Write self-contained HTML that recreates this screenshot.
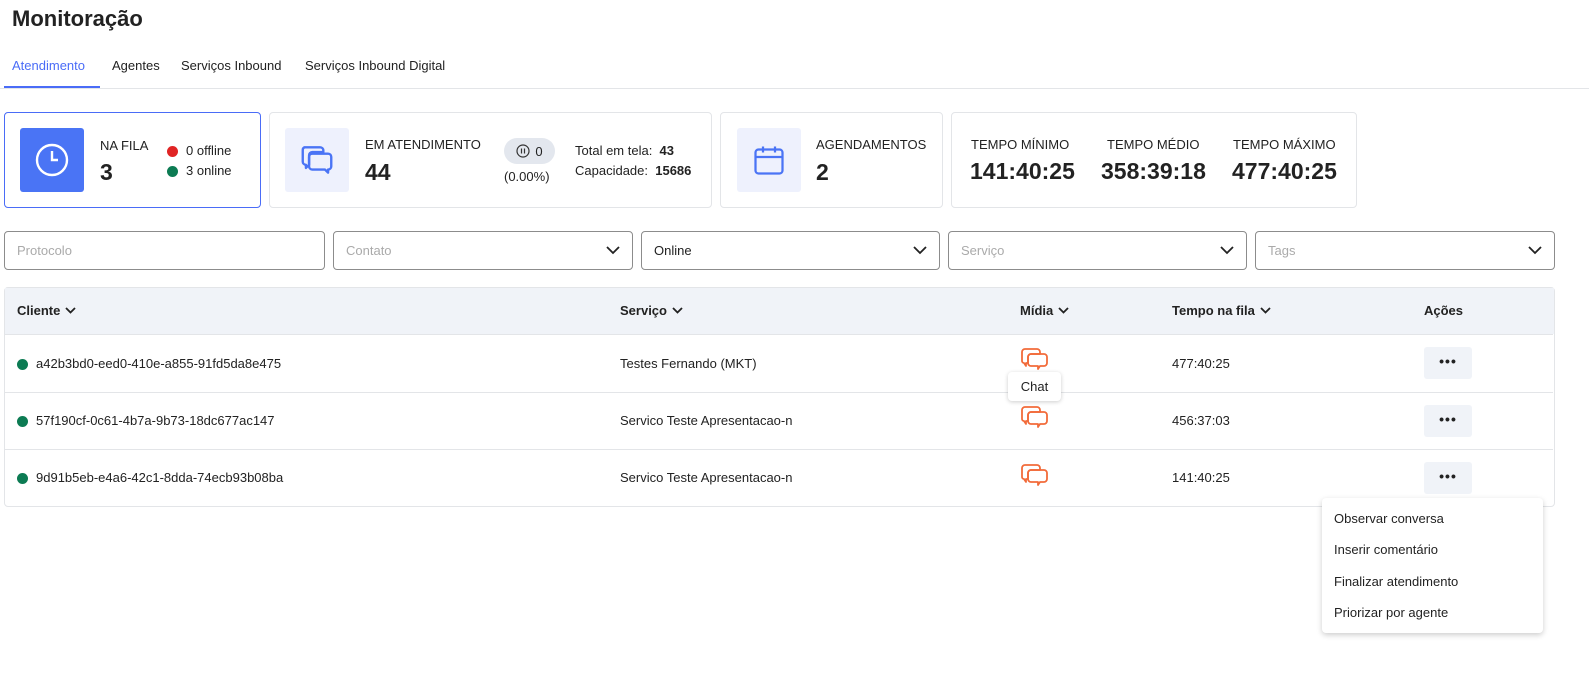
<!DOCTYPE html>
<html><head><meta charset="utf-8"><style>
*{box-sizing:border-box;margin:0;padding:0}
body{width:1589px;height:675px;background:#fff;font-family:"Liberation Sans",sans-serif;color:#222;position:relative;overflow:hidden;font-size:13px}
.a{position:absolute}
.card{position:absolute;top:112px;height:96px;border:1px solid #e3e5e8;border-radius:4px;background:#fff}
.ib{position:absolute;top:15px;width:64px;height:64px;border-radius:3px;background:#eef1fd;display:flex;align-items:center;justify-content:center}
.lbl{font-size:13px;color:#222}
.big{font-size:23px;font-weight:bold;color:#222}
.f{position:absolute;top:231px;height:39px;border:1px solid #8c8c8c;border-radius:4px;padding:0 12px;display:flex;align-items:center;justify-content:space-between;font-size:13px;color:#aaa}
.th{position:absolute;top:303px;font-weight:bold;font-size:13px;color:#222;display:flex;align-items:center;gap:5px}
.row{position:absolute;left:5px;width:1548px;border-top:1px solid #e3e5e8}
.dot{display:inline-block;width:11px;height:11px;border-radius:50%;background:#0c7b53;vertical-align:middle;margin-right:8px}
.btn{position:absolute;left:1424px;width:48px;height:32px;background:#f0f3f8;border-radius:3px;text-align:center;font-weight:bold;line-height:28px;font-size:14px;letter-spacing:1px}
.mi{position:absolute;left:12px;font-size:13px;color:#222}
</style></head><body>
<div class="a" style="left:12px;top:6px;font-size:22px;font-weight:bold">Monitoração</div>
<div class="a" style="left:12px;top:58px;font-size:13px;color:#4a6cf7">Atendimento</div>
<div class="a" style="left:112px;top:58px">Agentes</div>
<div class="a" style="left:181px;top:58px">Serviços Inbound</div>
<div class="a" style="left:305px;top:58px">Serviços Inbound Digital</div>
<div class="a" style="left:0;top:88px;width:1589px;height:1px;background:#e3e5e8"></div>
<div class="a" style="left:4px;top:86px;width:96px;height:2px;background:#4a6cf7"></div>

<div class="card" style="left:4px;width:257px;border-color:#4a6cf7">
 <div class="ib" style="left:15px;background:#4a74f5"><svg width="36" height="36" viewBox="0 0 24 24" fill="none" stroke="#fff" stroke-width="1.6"><circle cx="12" cy="12" r="10"/><path d="M12 6v6h4"/></svg></div>
 <div class="a lbl" style="left:95px;top:25px">NA FILA</div>
 <div class="a big" style="left:95px;top:46px">3</div>
 <div class="a lbl" style="left:162px;top:30px"><span class="dot" style="background:#e02424"></span>0 offline</div>
 <div class="a lbl" style="left:162px;top:50px"><span class="dot"></span>3 online</div>
</div>
<div class="card" style="left:269px;width:443px">
 <div class="ib" style="left:15px"><svg width="38" height="38" viewBox="0 0 24 24" fill="none" stroke="#4a74f5" stroke-width="1.5" stroke-linejoin="round"><path d="M4 4h10a2 2 0 0 1 2 2v1H9a2 2 0 0 0-2 2v6l-2 2v-2a2 2 0 0 1-2-2V6a2 2 0 0 1 1-2z"/><path d="M9 8h10a2 2 0 0 1 2 2v6a2 2 0 0 1-2 2v2l-2-2h-8a2 2 0 0 1-2-2v-6a2 2 0 0 1 2-2z"/></svg></div>
 <div class="a lbl" style="left:95px;top:24px">EM ATENDIMENTO</div>
 <div class="a big" style="left:95px;top:46px">44</div>
 <div class="a" style="left:234px;top:25px;width:51px;height:26px;border-radius:13px;background:#e3e7ee;font-size:13px;display:flex;align-items:center;justify-content:center;gap:5px"><svg width="14" height="14" viewBox="0 0 14 14" fill="none" stroke="#333" stroke-width="1.2"><circle cx="7" cy="7" r="6"/><path d="M5.5 4.5v5M8.5 4.5v5"/></svg>0</div>
 <div class="a lbl" style="left:234px;top:56px">(0.00%)</div>
 <div class="a lbl" style="left:305px;top:30px">Total em tela:&nbsp; <b>43</b></div>
 <div class="a lbl" style="left:305px;top:50px">Capacidade:&nbsp; <b>15686</b></div>
</div>
<div class="card" style="left:720px;width:223px">
 <div class="ib" style="left:16px"><svg width="36" height="36" viewBox="0 0 24 24" fill="none" stroke="#4a74f5" stroke-width="1.5"><rect x="3" y="5" width="18" height="16" rx="2"/><path d="M3 10h18M8 3v4M16 3v4"/></svg></div>
 <div class="a lbl" style="left:95px;top:24px">AGENDAMENTOS</div>
 <div class="a big" style="left:95px;top:46px">2</div>
</div>
<div class="card" style="left:951px;width:406px">
 <div class="a lbl" style="left:19px;top:24px">TEMPO MÍNIMO</div>
 <div class="a big" style="left:18px;top:45px">141:40:25</div>
 <div class="a lbl" style="left:155px;top:24px">TEMPO MÉDIO</div>
 <div class="a big" style="left:149px;top:45px">358:39:18</div>
 <div class="a lbl" style="left:281px;top:24px">TEMPO MÁXIMO</div>
 <div class="a big" style="left:280px;top:45px">477:40:25</div>
</div>

<div class="f" style="left:4px;width:321px">Protocolo</div>
<div class="f" style="left:333px;width:300px;color:#aaa">Contato<svg width="14" height="9" viewBox="0 0 14 9" fill="none" stroke="#222" stroke-width="1.8"><path d="M1 1l6 6 6-6"/></svg></div>
<div class="f" style="left:641px;width:299px;color:#222">Online<svg width="14" height="9" viewBox="0 0 14 9" fill="none" stroke="#222" stroke-width="1.8"><path d="M1 1l6 6 6-6"/></svg></div>
<div class="f" style="left:948px;width:299px">Serviço<svg width="14" height="9" viewBox="0 0 14 9" fill="none" stroke="#222" stroke-width="1.8"><path d="M1 1l6 6 6-6"/></svg></div>
<div class="f" style="left:1255px;width:300px">Tags<svg width="14" height="9" viewBox="0 0 14 9" fill="none" stroke="#222" stroke-width="1.8"><path d="M1 1l6 6 6-6"/></svg></div>

<div class="a" style="left:4px;top:287px;width:1551px;height:220px;border:1px solid #e3e5e8;border-radius:4px"></div>
<div class="a" style="left:5px;top:288px;width:1549px;height:46px;background:#f0f3f8"></div>
<div class="th" style="left:17px">Cliente <svg width="11" height="7" viewBox="0 0 11 7" fill="none" stroke="#222" stroke-width="1.8"><path d="M1 1l4.5 4.5L10 1"/></svg></div>
<div class="th" style="left:620px">Serviço <svg width="11" height="7" viewBox="0 0 11 7" fill="none" stroke="#222" stroke-width="1.8"><path d="M1 1l4.5 4.5L10 1"/></svg></div>
<div class="th" style="left:1020px">Mídia <svg width="11" height="7" viewBox="0 0 11 7" fill="none" stroke="#222" stroke-width="1.8"><path d="M1 1l4.5 4.5L10 1"/></svg></div>
<div class="th" style="left:1172px">Tempo na fila <svg width="11" height="7" viewBox="0 0 11 7" fill="none" stroke="#222" stroke-width="1.8"><path d="M1 1l4.5 4.5L10 1"/></svg></div>
<div class="th" style="left:1424px">Ações</div>

<div class="row" style="top:334px"></div>
<div class="row" style="top:392px"></div>
<div class="row" style="top:449px"></div>

<div class="a" style="left:17px;top:356px"><span class="dot"></span>a42b3bd0-eed0-410e-a855-91fd5da8e475</div>
<div class="a" style="left:620px;top:356px">Testes Fernando (MKT)</div>
<div class="a" style="left:1172px;top:356px">477:40:25</div>
<div class="btn" style="top:347px">•••</div>

<div class="a" style="left:17px;top:413px"><span class="dot"></span>57f190cf-0c61-4b7a-9b73-18dc677ac147</div>
<div class="a" style="left:620px;top:413px">Servico Teste Apresentacao-n</div>
<div class="a" style="left:1172px;top:413px">456:37:03</div>
<div class="btn" style="top:405px">•••</div>

<div class="a" style="left:17px;top:470px"><span class="dot"></span>9d91b5eb-e4a6-42c1-8dda-74ecb93b08ba</div>
<div class="a" style="left:620px;top:470px">Servico Teste Apresentacao-n</div>
<div class="a" style="left:1172px;top:470px">141:40:25</div>
<div class="btn" style="top:462px">•••</div>

<svg class="a" style="left:1021px;top:348px" width="27" height="25" viewBox="0 0 27 25" fill="none" stroke="#f26b3a" stroke-width="1.8" stroke-linejoin="round"><path d="M4 1h12a3 3 0 0 1 3 3v2H10a3 3 0 0 0-3 3v6H5v3l-2-3a2 2 0 0 1-2-2V4a3 3 0 0 1 3-3z"/><path d="M10 6h13a3 3 0 0 1 3 3v6a3 3 0 0 1-3 3h-4l-2 3v-3h-7a3 3 0 0 1-3-3V9a3 3 0 0 1 3-3z"/></svg>
<svg class="a" style="left:1021px;top:406px" width="27" height="25" viewBox="0 0 27 25" fill="none" stroke="#f26b3a" stroke-width="1.8" stroke-linejoin="round"><path d="M4 1h12a3 3 0 0 1 3 3v2H10a3 3 0 0 0-3 3v6H5v3l-2-3a2 2 0 0 1-2-2V4a3 3 0 0 1 3-3z"/><path d="M10 6h13a3 3 0 0 1 3 3v6a3 3 0 0 1-3 3h-4l-2 3v-3h-7a3 3 0 0 1-3-3V9a3 3 0 0 1 3-3z"/></svg>
<svg class="a" style="left:1021px;top:464px" width="27" height="25" viewBox="0 0 27 25" fill="none" stroke="#f26b3a" stroke-width="1.8" stroke-linejoin="round"><path d="M4 1h12a3 3 0 0 1 3 3v2H10a3 3 0 0 0-3 3v6H5v3l-2-3a2 2 0 0 1-2-2V4a3 3 0 0 1 3-3z"/><path d="M10 6h13a3 3 0 0 1 3 3v6a3 3 0 0 1-3 3h-4l-2 3v-3h-7a3 3 0 0 1-3-3V9a3 3 0 0 1 3-3z"/></svg>

<div class="a" style="left:1008px;top:372px;width:53px;height:29px;background:#fff;border-radius:4px;box-shadow:0 1px 4px rgba(0,0,0,.2);text-align:center;line-height:29px">Chat</div>

<div class="a" style="left:1322px;top:498px;width:221px;height:135px;background:#fff;border-radius:4px;box-shadow:0 2px 6px rgba(0,0,0,.2)">
 <div class="mi" style="top:13px">Observar conversa</div>
 <div class="mi" style="top:44px">Inserir comentário</div>
 <div class="mi" style="top:76px">Finalizar atendimento</div>
 <div class="mi" style="top:107px">Priorizar por agente</div>
</div>
</body></html>
